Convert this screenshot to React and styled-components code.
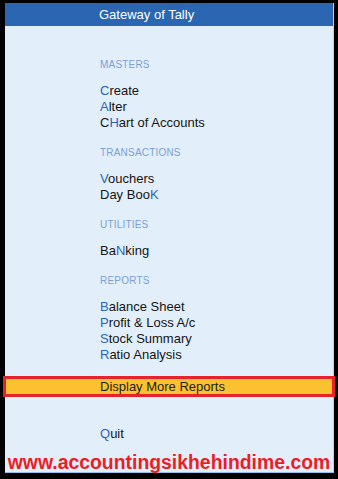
import React from 'react';
import styled, { createGlobalStyle } from 'styled-components';

const GlobalStyle = createGlobalStyle`
  html, body {
    margin: 0;
    padding: 0;
    background: #000;
  }
  body {
    font-family: "Liberation Sans", Arial, sans-serif;
  }
`;

const menu = [
  {
    title: 'Masters',
    items: [
      ['', 'C', 'reate'],
      ['', 'A', 'lter'],
      ['C', 'H', 'art of Accounts'],
    ],
  },
  {
    title: 'Transactions',
    items: [
      ['', 'V', 'ouchers'],
      ['Day Boo', 'K', ''],
    ],
  },
  {
    title: 'Utilities',
    items: [['Ba', 'N', 'king']],
  },
  {
    title: 'Reports',
    items: [
      ['', 'B', 'alance Sheet'],
      ['', 'P', 'rofit & Loss A/c'],
      ['', 'S', 'tock Summary'],
      ['', 'R', 'atio Analysis'],
    ],
  },
];

const Gateway = () => (
  <Frame>
    <GlobalStyle />
    <Panel>
      <TitleBar>Gateway of Tally</TitleBar>
      <Body>
        {menu.map((section) => (
          <Section key={section.title}>
            <SectionLabel>{section.title}</SectionLabel>
            {section.items.map(([pre, key, post]) => (
              <Item key={pre + key + post}>
                {pre}
                <Hotkey>{key}</Hotkey>
                {post}
              </Item>
            ))}
          </Section>
        ))}
        <Highlight>Display More Reports</Highlight>
        <Item $top={29}>
          <Hotkey>Q</Hotkey>uit
        </Item>
        <Watermark>www.accountingsikhehindime.com</Watermark>
      </Body>
    </Panel>
  </Frame>
);

const Frame = styled.div`
  box-sizing: border-box;
  width: 338px;
  height: 479px;
  padding: 3px 4px 6px 5px;
  background: #000;
`;

const Panel = styled.div`
  box-sizing: border-box;
  height: 100%;
  display: flex;
  flex-direction: column;
  background: #e2effb;
  border-right: 1px solid #b2d2f0;
  border-bottom: 1px solid #93c1ea;
`;

const TitleBar = styled.div`
  height: 23px;
  line-height: 23px;
  padding-left: 94px;
  background: #2a66b1;
  color: #fff;
  font-size: 13px;
`;

const Body = styled.div`
  display: flex;
  flex-direction: column;
  padding-top: 31px;
`;

const Section = styled.div`
  display: flex;
  flex-direction: column;
  margin-bottom: 14px;

  &:nth-child(4) {
    margin-bottom: 13px;
  }
`;

const SectionLabel = styled.div`
  padding-left: 95px;
  height: 16px;
  line-height: 16px;
  margin-bottom: 10px;
  font-size: 10px;
  letter-spacing: 0.2px;
  text-transform: uppercase;
  color: #7ba0d3;
`;

const Item = styled.div`
  padding-left: 95px;
  height: 16px;
  line-height: 16px;
  margin-top: ${({ $top }) => ($top ? `${$top}px` : '0')};
  font-size: 13px;
  color: #141414;
`;

const Hotkey = styled.span`
  color: #2c63b6;
`;

const Highlight = styled.div`
  margin: 0 -2px;
  height: 15px;
  line-height: 15px;
  padding-left: 94px;
  border: 3px solid #e6222b;
  background: #fcc12f;
  font-size: 13px;
  color: #1c1c1c;
`;

const Watermark = styled.div`
  margin-top: 9px;
  height: 22px;
  line-height: 22px;
  text-align: center;
  font-size: 19.4px;
  font-weight: bold;
  color: #ee1c25;
`;

export default Gateway;
